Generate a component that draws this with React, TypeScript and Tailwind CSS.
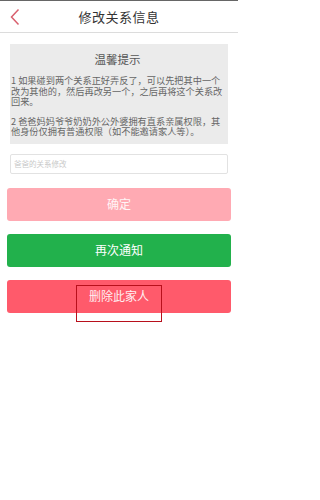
import React from "react";

const font = { fontFamily: '"Noto Sans CJK SC", "Noto Sans", sans-serif' };

export default function App() {
  return (
    <div className="w-[238px] h-[500px] bg-white text-[#555]" style={font}>
      {/* Header */}
      <div className="h-px bg-[#666]" />
      <div className="relative h-[32px] flex items-center justify-center border-b border-[#dcdcdc]">
        <svg className="absolute left-[9px] top-[7px]" width="12" height="18" viewBox="0 0 12 18">
          <path d="M9.5 1.5 L2.5 9 L9.5 16.5" fill="none" stroke="#d9606e" strokeWidth="1.5" />
        </svg>
        <span className="text-[13px] text-[#333] tracking-[0.5px]">修改关系信息</span>
      </div>

      {/* Tips */}
      <div className="mx-[10px] mt-[11px] bg-[#ebebeb] pl-[1px] pr-[4px] pt-[7px] pb-[7px]">
        <div className="text-center text-[11.5px] leading-[16px] text-[#555] mb-[8px]">温馨提示</div>
        <p className="text-[9.2px] leading-[10.5px] text-[#666]">
          1 如果碰到两个关系正好弄反了，可以先把其中一个改为其他的，然后再改另一个，之后再将这个关系改回来。
        </p>
        <p className="text-[9.2px] leading-[10.5px] text-[#666] mt-[9px]">
          2 爸爸妈妈爷爷奶奶外公外婆拥有直系亲属权限，其他身份仅拥有普通权限（如不能邀请家人等）。
        </p>
      </div>

      {/* Input */}
      <div className="mx-[10px] mt-[10px] h-[20px] border border-[#e2e2e2] rounded-[2px] flex items-center px-[3px]">
        <span className="text-[7.5px] text-[#c8c8c8]">爸爸的关系修改</span>
      </div>

      {/* Buttons */}
      <div className="mx-[7px] mt-[14px] flex flex-col gap-[13px]">
        <div className="h-[33px] rounded-[3px] bg-[#ffaab3] flex items-center justify-center text-[12px] text-[#fff5f6]">
          确定
        </div>
        <div className="h-[33px] rounded-[3px] bg-[#22b14c] flex items-center justify-center text-[12px] text-white">
          再次通知
        </div>
        <div className="relative h-[33px] rounded-[3px] bg-[#ff5a6b] flex items-center justify-center text-[12px] text-[#fff0f2]">
          删除此家人
          <div className="absolute left-[69px] top-[5px] w-[86px] h-[37px] border-[1.5px] border-[#b8101c]" />
        </div>
      </div>
    </div>
  );
}
